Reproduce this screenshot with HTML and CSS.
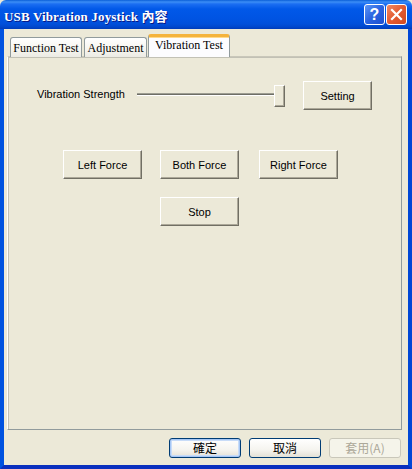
FILE: index.html
```html
<!DOCTYPE html>
<html>
<head>
<meta charset="utf-8">
<link rel="stylesheet" href="styles.css">
</head>
<body>
<div class="window">
  <div class="titlebar">
    <span class="title">USB Vibration Joystick 內容</span>
    <div class="caption-btns">
      <div class="cap help">?</div>
      <div class="cap close">
        <svg width="13" height="13" viewBox="0 0 13 13"><path d="M2 2 L11 11 M11 2 L2 11" stroke="#fff" stroke-width="2.2" stroke-linecap="square"/></svg>
      </div>
    </div>
  </div>
  <div class="frame">
    <div class="tabs">
      <div class="tab t1">Function Test</div>
      <div class="tab t2">Adjustment</div>
      <div class="tab t3 active">Vibration Test</div>
    </div>
    <div class="panel">
      <div class="row1">
        <span class="label">Vibration Strength</span>
        <div class="slider">
          <div class="track"></div>
          <div class="thumb"></div>
        </div>
        <button class="btn setting">Setting</button>
      </div>
      <div class="row2">
        <button class="btn">Left Force</button>
        <button class="btn">Both Force</button>
        <button class="btn">Right Force</button>
      </div>
      <div class="row3">
        <button class="btn">Stop</button>
      </div>
    </div>
    <div class="footer">
      <button class="xbtn default">確定</button>
      <button class="xbtn">取消</button>
      <button class="xbtn disabled">套用(A)</button>
    </div>
  </div>
</div>
</body>
</html>
```

FILE: styles.css
```css
html, body {
  margin: 0;
  padding: 0;
  background: #ECE9D8;
}
.window {
  width: 412px;
  height: 469px;
  display: flex;
  flex-direction: column;
  overflow: hidden;
}
.titlebar {
  height: 29px;
  flex: none;
  display: flex;
  align-items: center;
  justify-content: space-between;
  padding: 0 5px 0 4px;
  box-sizing: border-box;
  background: linear-gradient(to bottom, #0A5FD8 0px, #3C8EF6 2px, #1B6EF2 4px, #0158E8 9px, #0054E3 18px, #0150DA 24px, #0047CC 27px, #003CB8 29px);
  border-radius: 6px 6px 0 0;
}
.title {
  font-family: "Liberation Serif", "Noto Sans CJK TC", serif;
  font-weight: bold;
  font-size: 13px;
  color: #fff;
  text-shadow: 1px 1px 0 #0A1883;
  letter-spacing: 0.15px;
  padding-top: 1px;
}
.caption-btns {
  display: flex;
  gap: 1px;
  align-items: center;
}
.cap {
  width: 21px;
  height: 21px;
  box-sizing: border-box;
  border: 1px solid #fff;
  border-radius: 3px;
  display: flex;
  align-items: center;
  justify-content: center;
}
.help {
  background: linear-gradient(135deg, #5C95F5 0%, #2A63E0 50%, #1C4FD0 100%);
  color: #fff;
  font-family: "Liberation Sans", sans-serif;
  font-weight: bold;
  font-size: 16px;
}
.close {
  background: linear-gradient(135deg, #F08A64 0%, #E35A31 50%, #D04A20 100%);
}
.frame {
  flex: 1;
  display: flex;
  flex-direction: column;
  border-left: 4px solid #0052E0;
  border-right: 4px solid #0047D6;
  border-bottom: 4px solid #0A2FBE;
  background: #ECE9D8;
}
.tabs {
  display: flex;
  align-items: flex-end;
  height: 28px;
  padding-left: 6px;
  margin-bottom: -1px;
  position: relative;
  z-index: 1;
}
.tab {
  height: 20px;
  box-sizing: border-box;
  border: 1px solid #919B9C;
  border-bottom: none;
  border-radius: 3px 3px 0 0;
  background: linear-gradient(to bottom, #FFFFFF 0%, #F6F5EF 60%, #ECEBE4 100%);
  font-family: "Liberation Serif", serif;
  font-size: 12px;
  color: #000;
  padding-top: 3px;
  text-align: center;
  margin-right: 2px;
  white-space: nowrap;
}
.t1 { width: 72px; }
.t2 { width: 63px; }
.tab.active {
  width: 82px;
  height: 23px;
  border-top: 3px solid #F4B33C;
  background: #FCFCFE;
  padding-top: 1px;
  margin-left: -1px;
  box-shadow: inset 0 1px 0 #FFD98A;
}
.panel {
  height: 374px;
  margin: 0 6px 0 3px;
  box-sizing: border-box;
  border: 1px solid #919B9C;
  border-top-color: #C9C7BA;
  border-left-color: #FFFFFF;
  box-shadow: inset 1px 1px 0 #C2C1B5;
  background: #ECE9D8;
  padding: 24px 0 0 29px;
}
.row1 {
  display: flex;
  align-items: center;
  height: 29px;
}
.label {
  width: 100px;
  font-family: "Liberation Sans", Arial, sans-serif;
  font-size: 11px;
  color: #000;
  margin-top: -3px;
}
.slider {
  width: 148px;
  height: 22px;
  position: relative;
}
.track {
  position: absolute;
  left: 0;
  top: 8px;
  width: 142px;
  height: 3px;
  box-sizing: border-box;
  border-top: 1px solid #9D9D92;
  border-bottom: 1px solid #FFFFFF;
  background: #6E6E66;
}
.thumb {
  position: absolute;
  left: 137px;
  top: 0;
  width: 11px;
  height: 22px;
  box-sizing: border-box;
  background: #ECE9D8;
  border: 1px solid;
  border-color: #FFFFFF #716F64 #716F64 #FFFFFF;
  box-shadow: inset -1px -1px 0 #ACA899;
}
.btn {
  font-family: "Liberation Sans", Arial, sans-serif;
  font-size: 11px;
  color: #000;
  background: #ECE9D8;
  width: 79px;
  height: 29px;
  box-sizing: border-box;
  border: 1px solid;
  border-color: #FFFFFF #716F64 #716F64 #FFFFFF;
  box-shadow: inset -1px -1px 0 #ACA899;
  padding: 0;
  margin: 0;
}
.btn.setting {
  width: 69px;
  margin-left: 18px;
}
.row2 {
  display: flex;
  margin-top: 40px;
  margin-left: 26px;
}
.row2 .btn:nth-child(2) { margin-left: 18px; }
.row2 .btn:nth-child(3) { margin-left: 20px; }
.row3 {
  display: flex;
  margin-top: 18px;
  margin-left: 123px;
}
.footer {
  display: flex;
  gap: 8px;
  padding: 8px 0 0 165px;
}
.xbtn {
  width: 72px;
  height: 20px;
  box-sizing: border-box;
  border: 1px solid #003C74;
  border-radius: 3px;
  background: linear-gradient(to bottom, #FFFFFF 0%, #F5F4EF 60%, #E3E1D6 100%);
  font-family: "Noto Sans CJK TC", sans-serif;
  font-size: 12px;
  line-height: 1;
  color: #000;
  padding: 0;
  margin: 0;
}
.xbtn.default {
  box-shadow: inset 0 0 0 1px #A6C7F5, inset 0 0 0 2px #C8DCF8;
}
.xbtn.disabled {
  border-color: #C9C7BA;
  background: #F5F4EA;
  color: #ACA899;
}
```
